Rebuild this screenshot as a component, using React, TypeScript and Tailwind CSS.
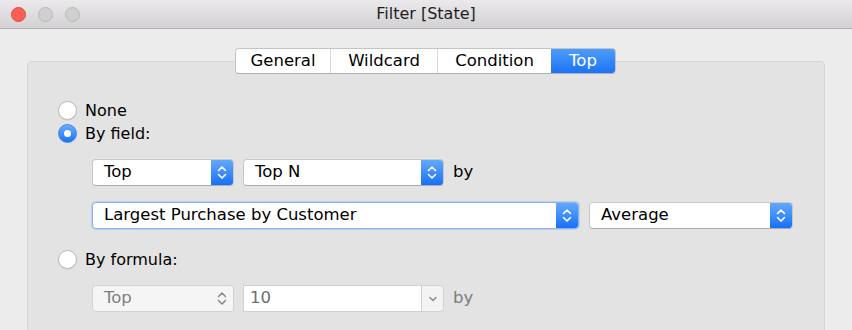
import React from "react";

function Chevrons({ color }: { color: string }) {
  return (
    <svg width="10" height="17" viewBox="0 0 10 17">
      <path d="M1.5 6.5 L5 3 L8.5 6.5 M1.5 10.5 L5 14 L8.5 10.5" fill="none" stroke={color} strokeWidth="1.6" strokeLinecap="round" strokeLinejoin="round" />
    </svg>
  );
}

function Select({ w, text, focus, disabled }: { w: string; text: string; focus?: boolean; disabled?: boolean }) {
  return (
    <div
      className={`${w} h-[27px] flex rounded-[4px] border overflow-hidden ${
        disabled
          ? "bg-[#f5f5f5] border-[#d3d3d3]"
          : focus
          ? "bg-white border-[#8db4ee] shadow-[0_0_0_1px_rgba(120,165,235,0.35)]"
          : "bg-white border-[#c8c8c8] border-b-[#acacac]"
      }`}
    >
      <div className={`flex-1 flex items-center pl-[11px] text-[16.5px] ${disabled ? "text-[#7e7e7e]" : "text-black"}`}>{text}</div>
      {disabled ? (
        <div className="w-[22px] flex items-center justify-center">
          <Chevrons color="#8a8a8a" />
        </div>
      ) : (
        <div className="w-[22px] flex items-center justify-center bg-linear-to-b from-[#62a9fb] to-[#1470f6]">
          <Chevrons color="#ffffff" />
        </div>
      )}
    </div>
  );
}

function Radio({ label, checked }: { label: string; checked?: boolean }) {
  return (
    <div className="h-[23px] flex items-center gap-[8px]">
      {checked ? (
        <div className="w-[19px] h-[19px] rounded-full bg-linear-to-b from-[#68adfb] to-[#1672f6] border border-[#3d86ee] flex items-center justify-center">
          <div className="w-[7px] h-[7px] rounded-full bg-white" />
        </div>
      ) : (
        <div className="w-[19px] h-[19px] rounded-full bg-white border border-[#b8b8b8] shadow-[0_1px_0_rgba(0,0,0,0.06)]" />
      )}
      <span className="text-[16px] text-black">{label}</span>
    </div>
  );
}

export default function App() {
  const tabs = [
    { name: "General", w: "w-[94px]" },
    { name: "Wildcard", w: "w-[107px]" },
    { name: "Condition", w: "w-[114px]" },
    { name: "Top", w: "w-[64px]", active: true },
  ];

  return (
    <div className="w-[852px] h-[330px] overflow-hidden bg-[#ececec] font-['DejaVu_Sans','Liberation_Sans',sans-serif]">
      {/* title bar */}
      <div className="h-[29px] flex items-center relative bg-linear-to-b from-[#ebe9eb] to-[#d3d1d3] border-b border-[#b1b1b1]">
        <div className="flex items-center gap-[12px] pl-[11px]">
          <div className="w-[15px] h-[15px] rounded-full bg-[#fc5f57] border border-[#df4a43]" />
          <div className="w-[15px] h-[15px] rounded-full bg-[#d1d0d1] border border-[#b9b8b9]" />
          <div className="w-[15px] h-[15px] rounded-full bg-[#d1d0d1] border border-[#b9b8b9]" />
        </div>
        <div className="flex-1 text-center text-[16px] text-[#1e1e1e] pr-[80px]">Filter [State]</div>
      </div>

      <div className="pt-[19px] pl-[27px] pr-[27px] flex flex-col">
        {/* tabs */}
        <div className="relative z-10 ml-[208px] flex h-[26px] w-fit rounded-[4px] border border-[#c4c4c4] border-b-[#b0b0b0] bg-white overflow-hidden">
          {tabs.map((t, i) => (
            <div
              key={t.name}
              className={`${t.w} flex items-center justify-center text-[16.5px] ${
                t.active ? "bg-linear-to-b from-[#4d9cf9] to-[#1a72f6] text-white" : "text-black"
              } ${i > 0 && !t.active ? "border-l border-[#d8d8d8]" : ""}`}
            >
              {t.name}
            </div>
          ))}
        </div>

        {/* panel */}
        <div className="-mt-[13px] h-[300px] rounded-[5px] bg-[#e3e3e3] border border-[#d6d6d6] pl-[30px] pt-[37px] flex flex-col">
          <Radio label="None" />
          <Radio label="By field:" checked />

          <div className="ml-[34px] mt-[14px] flex items-center">
            <Select w="w-[142px]" text="Top" />
            <div className="w-[9px]" />
            <Select w="w-[201px]" text="Top N" />
            <span className="ml-[9px] text-[16.5px] text-black">by</span>
          </div>

          <div className="ml-[34px] mt-[16px] flex items-center gap-[10px]">
            <Select w="w-[487px]" text="Largest Purchase by Customer" focus />
            <Select w="w-[204px]" text="Average" />
          </div>

          <div className="mt-[19px]">
            <Radio label="By formula:" />
          </div>

          <div className="ml-[34px] mt-[14px] flex items-center">
            <Select w="w-[142px]" text="Top" disabled />
            <div className="ml-[9px] w-[201px] h-[27px] flex">
              <div className="flex-1 bg-white border border-[#cfcfcf] flex items-center pl-[6px] text-[16.5px] text-[#6e6e6e]">10</div>
              <div className="w-[22px] bg-[#f3f3f3] border border-l-0 border-[#d3d3d3] rounded-r-[4px] flex items-center justify-center">
                <svg width="10" height="8" viewBox="0 0 10 8">
                  <path d="M2 2.5 L5 5.5 L8 2.5" fill="none" stroke="#8a8a8a" strokeWidth="1.4" strokeLinecap="round" strokeLinejoin="round" />
                </svg>
              </div>
            </div>
            <span className="ml-[9px] text-[16.5px] text-[#7c7c7c]">by</span>
          </div>
        </div>
      </div>
    </div>
  );
}
